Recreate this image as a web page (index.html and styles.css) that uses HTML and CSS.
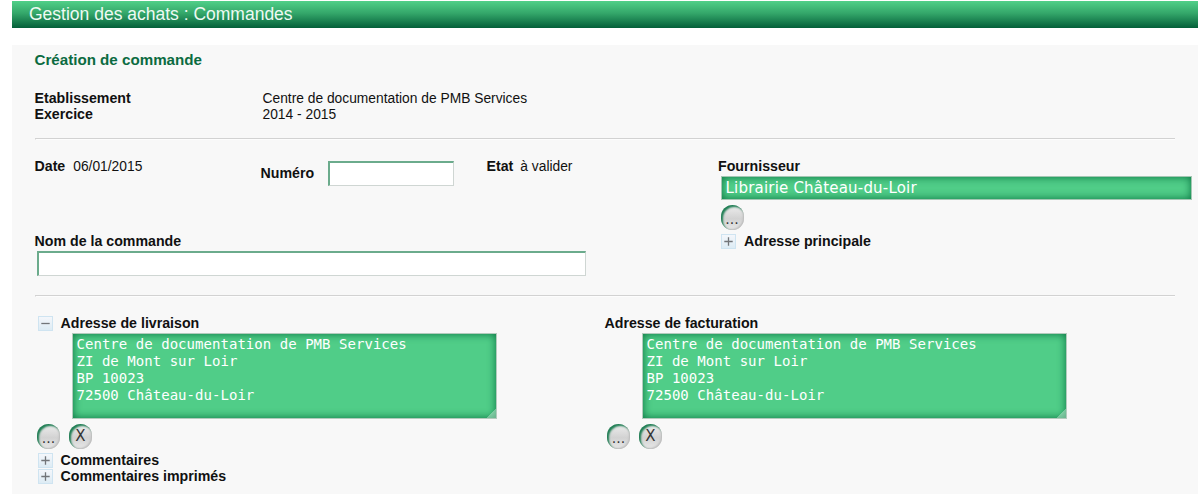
FILE: index.html
```html
<!DOCTYPE html>
<html lang="fr">
<head>
<meta charset="utf-8">
<title>Gestion des achats : Commandes</title>
<link rel="stylesheet" href="styles.css">
</head>
<body>
<h1 class="page-title">Gestion des achats : Commandes</h1>
<main class="panel">
  <h2 class="panel-title">Création de commande</h2>
  <dl class="facts">
    <dt>Etablissement</dt><dd>Centre de documentation de PMB Services</dd>
    <dt>Exercice</dt><dd>2014 - 2015</dd>
  </dl>
  <div class="rule"></div>
  <section class="order">
    <div class="order-left">
      <div class="order-row">
        <div class="date"><b>Date</b><span>06/01/2015</span></div>
        <div class="number"><label for="num">Numéro</label><input class="field" id="num" type="text"></div>
        <div class="state"><b>Etat</b><span>à valider</span></div>
      </div>
      <label class="name-label" for="name">Nom de la commande</label>
      <input class="field name-field" id="name" type="text">
    </div>
    <div class="supplier">
      <label for="supplier">Fournisseur</label>
      <input class="supplier-field" id="supplier" type="text" value="Librairie Château-du-Loir">
      <button class="round" type="button"><span class="dots">...</span></button>
      <div class="toggle supplier-toggle"><svg class="icon" viewBox="0 0 15 15"><use href="#plus"/></svg><b>Adresse principale</b></div>
    </div>
  </section>
  <div class="rule"></div>
  <section class="addresses">
    <div class="address">
      <div class="toggle"><svg class="icon" viewBox="0 0 15 15"><use href="#minus"/></svg><b>Adresse de livraison</b></div>
      <textarea class="address-field">Centre de documentation de PMB Services
ZI de Mont sur Loir
BP 10023
72500 Château-du-Loir</textarea>
      <div class="actions"><button class="round" type="button"><span class="dots">...</span></button><button class="round" type="button"><span class="cross">X</span></button></div>
    </div>
    <div class="address">
      <div class="heading"><b>Adresse de facturation</b></div>
      <textarea class="address-field">Centre de documentation de PMB Services
ZI de Mont sur Loir
BP 10023
72500 Château-du-Loir</textarea>
      <div class="actions"><button class="round" type="button"><span class="dots">...</span></button><button class="round" type="button"><span class="cross">X</span></button></div>
    </div>
  </section>
  <div class="toggle comment"><svg class="icon" viewBox="0 0 15 15"><use href="#plus"/></svg><b>Commentaires</b></div>
  <div class="toggle comment"><svg class="icon" viewBox="0 0 15 15"><use href="#plus"/></svg><b>Commentaires imprimés</b></div>
</main>
<svg class="symbols" width="0" height="0">
  <linearGradient id="tile" x1="0" y1="0" x2="0" y2="1"><stop offset="0" stop-color="#f5f7fb"/><stop offset="1" stop-color="#dcebf4"/></linearGradient>
  <symbol id="minus" viewBox="0 0 15 15"><rect x=".5" y=".5" width="14" height="14" fill="url(#tile)" stroke="#cfe4f1"/><path d="M3.3 7.5h8.4" stroke="#727579" stroke-width="1.3"/></symbol>
  <symbol id="plus" viewBox="0 0 15 15"><rect x=".5" y=".5" width="14" height="14" fill="url(#tile)" stroke="#cfe4f1"/><path d="M3.3 7.5h8.4M7.5 3.3v8.4" stroke="#727579" stroke-width="1.3"/></symbol>
</svg>
</body>
</html>
```
FILE: styles.css
```css
* { box-sizing: border-box; }
body {
  margin: 0;
  height: 494px;
  padding: 1px 2.5px 0 11.5px;
  overflow: hidden;
  background: #fff;
  color: #111;
  font: 13.8px/16px "Liberation Sans", Arial, sans-serif;
}
.page-title {
  height: 26.5px;
  margin: 0 0 17px;
  padding-left: 17.5px;
  background: linear-gradient(#50d088, #34a76a 45%, #045f39);
  color: #eefaf3;
  font-size: 17.5px;
  font-weight: 400;
  line-height: 26px;
}
.panel { height: 450px; padding: 6px 23px 0; background: #f8f8f8; }
.panel-title { margin: 0 0 22px; color: #0b6b41; font-size: 15.15px; line-height: 18px; }
.facts { display: grid; grid-template-columns: 228px 1fr; margin: 0; line-height: 16px; }
.facts dt { font-size: 14.2px; font-weight: 700; line-height: 14px; }
.facts dd { margin: 0; }
.rule { height: 2px; border: solid; border-width: 1px 0 1px 1px; border-color: #d2d2d2 transparent #fdfdfd #d2d2d2; }
.facts + .rule { margin-top: 15.5px; }
b, label { padding-bottom: 2px; font-size: 14.2px; font-weight: 700; line-height: 14px; }
.field { height: 25px; border: 1px solid #cfd6d3; border-top: 2px solid #6bab8c; border-left: 2px solid #6bab8c; background: #fff; outline: none; }

.order { display: flex; height: 155px; padding-top: 18.5px; }
.order-left { flex: none; width: 683.5px; }
.order-row { display: flex; height: 75px; }
.date { display: flex; gap: 8px; width: 226px; }
.number { display: flex; gap: 14px; width: 226px; }
.number label { padding-top: 7.5px; }
.number .field { width: 126px; margin-top: 2px; }
.state { display: flex; gap: 7px; }
.name-label { display: block; }
.name-field { display: block; width: 549px; margin: 1.5px 0 0 2.5px; }
.supplier { width: 475px; flex: none; }
.supplier label { display: block; }
.supplier-field {
  display: block;
  width: 471px;
  height: 24px;
  margin: 1px 0 5px 2.5px;
  padding: 0 4px;
  border: 1px solid #a5c7b4;
  background: #50cd88;
  box-shadow: inset 0 0 9px #087341;
  color: #fff;
  font: 15px/20px "DejaVu Sans", sans-serif;
  letter-spacing: .2px;
}
.round {
  display: flex;
  justify-content: center;
  width: 23px;
  height: 25px;
  padding: 0;
  border: 0;
  border-radius: 12px;
  background: linear-gradient(#eee, #d2d2d2 55%, #e8e8e8);
  box-shadow: inset 2px 2px 2px #1f7e54, inset -1px -1px 2px #bbb;
  color: #333;
  font: 15px/25px "DejaVu Sans", sans-serif;
}
.dots { font-size: 14px; line-height: 28px; }
.supplier .round { margin-left: 2.5px; }
.toggle { display: flex; height: 16px; padding-left: 3px; }
.toggle b { margin-left: 8px; }
.icon { display: block; width: 15px; height: 15px; margin-top: .5px; }
.supplier-toggle { margin-top: 4px; }

.addresses { display: flex; padding-top: 18.5px; }
.address { width: 570px; flex: none; }
.heading { display: flex; height: 16px; }
.address-field {
  display: block;
  width: 425.5px;
  height: 86px;
  margin: 1px 0 5px 37px;
  padding: 2px 4px;
  border: 1px solid #b3cbbd;
  background: #50cd88;
  box-shadow: inset 0 0 9px #087341;
  color: #fff;
  font: 14px/17px "DejaVu Sans Mono", monospace;
  letter-spacing: .04px;
  overflow: hidden;
}
.address-field::-webkit-resizer {
  background: linear-gradient(135deg, transparent 68%, rgba(225, 240, 232, .4) 68%);
}
.actions { display: flex; gap: 9px; padding-left: 2.5px; }
.addresses + .comment { margin-top: 4px; }
.symbols { display: block; }
```
